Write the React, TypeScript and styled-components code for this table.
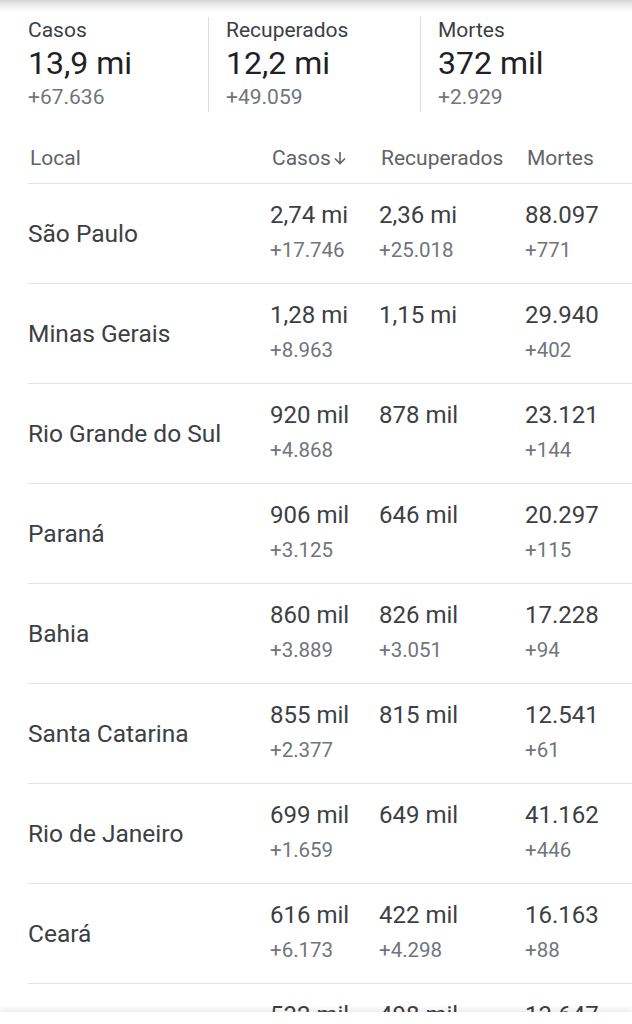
import React from 'react';
import styled, { createGlobalStyle } from 'styled-components';

const GlobalStyle = createGlobalStyle`
    html, body {
        margin: 0;
        padding: 0;
        background: #ffffff;
    }
    body {
        font-family: Roboto, "Noto Sans", "Liberation Sans", sans-serif;
        color: #202124;
    }
`;

type Stat = { label: string; value: string; delta: string };
type Region = { name: string; cases: string; casesDelta?: string; recovered: string; recoveredDelta?: string; deaths: string; deathsDelta?: string };

const totals: Stat[] = [
    { label: 'Casos', value: '13,9 mi', delta: '+67.636' },
    { label: 'Recuperados', value: '12,2 mi', delta: '+49.059' },
    { label: 'Mortes', value: '372 mil', delta: '+2.929' },
];

const regions: Region[] = [
    { name: 'São Paulo', cases: '2,74 mi', casesDelta: '+17.746', recovered: '2,36 mi', recoveredDelta: '+25.018', deaths: '88.097', deathsDelta: '+771' },
    { name: 'Minas Gerais', cases: '1,28 mi', casesDelta: '+8.963', recovered: '1,15 mi', deaths: '29.940', deathsDelta: '+402' },
    { name: 'Rio Grande do Sul', cases: '920 mil', casesDelta: '+4.868', recovered: '878 mil', deaths: '23.121', deathsDelta: '+144' },
    { name: 'Paraná', cases: '906 mil', casesDelta: '+3.125', recovered: '646 mil', deaths: '20.297', deathsDelta: '+115' },
    { name: 'Bahia', cases: '860 mil', casesDelta: '+3.889', recovered: '826 mil', recoveredDelta: '+3.051', deaths: '17.228', deathsDelta: '+94' },
    { name: 'Santa Catarina', cases: '855 mil', casesDelta: '+2.377', recovered: '815 mil', deaths: '12.541', deathsDelta: '+61' },
    { name: 'Rio de Janeiro', cases: '699 mil', casesDelta: '+1.659', recovered: '649 mil', deaths: '41.162', deathsDelta: '+446' },
    { name: 'Ceará', cases: '616 mil', casesDelta: '+6.173', recovered: '422 mil', recoveredDelta: '+4.298', deaths: '16.163', deathsDelta: '+88' },
    { name: 'Goiás', cases: '532 mil', casesDelta: '+2.508', recovered: '498 mil', deaths: '13.647', deathsDelta: '+97' },
];

const Cell = ({ value, delta }: { value: string; delta?: string }) => (
    <ValueCell>
        <Value>{value}</Value>
        {delta && <Delta>{delta}</Delta>}
    </ValueCell>
);

export default function App() {
    return (
        <Root>
            <GlobalStyle/>
            <TopShadow/>
            <Summary>
                {totals.map((t, i) => (
                    <SummaryCell key={t.label} $first={i === 0}>
                        <SummaryLabel>{t.label}</SummaryLabel>
                        <SummaryValue>{t.value}</SummaryValue>
                        <SummaryDelta>{t.delta}</SummaryDelta>
                    </SummaryCell>
                ))}
            </Summary>
            <Table>
                <HeaderRow>
                    <HeaderCell>Local</HeaderCell>
                    <HeaderCell>
                        Casos
                        <SortArrow width="14" height="16" viewBox="0 0 14 16">
                            <path d="M7 2v11.5M2 8.5l5 5 5-5" fill="none" stroke="currentColor" strokeWidth="1.6"/>
                        </SortArrow>
                    </HeaderCell>
                    <HeaderCell>Recuperados</HeaderCell>
                    <HeaderCell>Mortes</HeaderCell>
                </HeaderRow>
                {regions.map(r => (
                    <Row key={r.name}>
                        <Name>{r.name}</Name>
                        <Cell value={r.cases} delta={r.casesDelta}/>
                        <Cell value={r.recovered} delta={r.recoveredDelta}/>
                        <Cell value={r.deaths} delta={r.deathsDelta}/>
                    </Row>
                ))}
            </Table>
            <BottomBar/>
        </Root>
    );
}

const Root = styled.div`
    width: 632px;
    height: 1024px;
    overflow: hidden;
    position: relative;
    background: #fff;
`;

const TopShadow = styled.div`
    height: 12px;
    background: linear-gradient(to bottom, #d6d6d6 0%, #ececec 45%, #ffffff 100%);
`;

const Summary = styled.div`
    display: flex;
    padding: 5px 0 0 28px;
`;

const SummaryCell = styled.div<{ $first: boolean }>`
    display: flex;
    flex-direction: column;
    box-sizing: border-box;
    width: ${p => (p.$first ? '181px' : '213px')};
    padding-left: ${p => (p.$first ? '0' : '17px')};
    border-left: ${p => (p.$first ? 'none' : '1px solid #dadce0')};
`;

const SummaryLabel = styled.div`
    font-size: 21px;
    line-height: 26px;
    color: #3c4043;
`;

const SummaryValue = styled.div`
    font-size: 32px;
    line-height: 40px;
    color: #202124;
`;

const SummaryDelta = styled.div`
    font-size: 21px;
    line-height: 29px;
    color: #70757a;
`;

const Table = styled.div`
    margin-left: 28px;
`;

const columns = '242px 109px 146px 1fr';

const HeaderRow = styled.div`
    display: grid;
    grid-template-columns: ${columns};
    padding: 33px 0 12px;
    border-bottom: 1px solid #e3e3e3;
`;

const HeaderCell = styled.div`
    display: flex;
    align-items: center;
    padding-left: 2px;
    font-size: 21px;
    line-height: 26px;
    color: #5f6368;
`;

const SortArrow = styled.svg`
    margin-left: 2px;
    color: #5f6368;
`;

const Row = styled.div`
    display: grid;
    grid-template-columns: ${columns};
    height: 99px;
    border-bottom: 1px solid #e3e3e3;
`;

const Name = styled.div`
    align-self: center;
    font-size: 24.5px;
    line-height: 30px;
    color: #3c4043;
`;

const ValueCell = styled.div`
    display: flex;
    flex-direction: column;
    padding-top: 13px;
`;

const Value = styled.div`
    font-size: 24px;
    line-height: 36px;
    color: #3c4043;
`;

const Delta = styled.div`
    font-size: 20.5px;
    line-height: 34px;
    color: #70757a;
`;

const BottomBar = styled.div`
    position: absolute;
    left: 0;
    right: 0;
    bottom: 0;
    height: 12px;
    background: #fff;
    box-shadow: 0 -3px 5px rgba(0, 0, 0, 0.08);
`;
